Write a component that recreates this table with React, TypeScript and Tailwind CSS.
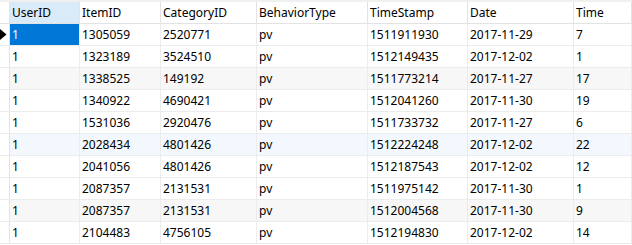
import React from 'react';

const columns = ["UserID", "ItemID", "CategoryID", "BehaviorType", "TimeStamp", "Date", "Time"];

const rows = [
    ["1", "1305059", "2520771", "pv", "1511911930", "2017-11-29", "7"],
    ["1", "1323189", "3524510", "pv", "1512149435", "2017-12-02", "1"],
    ["1", "1338525", "149192", "pv", "1511773214", "2017-11-27", "17"],
    ["1", "1340922", "4690421", "pv", "1512041260", "2017-11-30", "19"],
    ["1", "1531036", "2920476", "pv", "1511733732", "2017-11-27", "6"],
    ["1", "2028434", "4801426", "pv", "1512224248", "2017-12-02", "22"],
    ["1", "2041056", "4801426", "pv", "1512187543", "2017-12-02", "12"],
    ["1", "2087357", "2131531", "pv", "1511975142", "2017-11-30", "1"],
    ["1", "2087357", "2131531", "pv", "1512004568", "2017-11-30", "9"],
    ["1", "2104483", "4756105", "pv", "1512194830", "2017-12-02", "14"],
];

// row backgrounds as seen in the grid (striped rows + hovered row)
const rowBg = (i: number) => {
    if (i === 5) return "bg-[#f2f8fd]";
    if (i === 2 || i === 8) return "bg-[#f7f7f7]";
    return "bg-white";
};

const gridCols = "grid grid-cols-[10px_70px_81px_96px_111px_100px_106px_1fr]";

const App = () => {
    return (
        <div className="w-[632px] h-[245px] overflow-hidden bg-white font-['Noto_Sans',sans-serif] text-[12px] text-black">
            {/* top strip */}
            <div className="h-[2px] bg-[#f0f0f0]" />

            {/* Header */}
            <div className={`${gridCols} h-[22px] border-b border-[#e3e3e3]`}>
                <div className="border-r border-[#e3e3e3]" />
                {columns.map((c, i) => (
                    <div
                        key={c}
                        className={`flex items-center pl-[2px] border-r border-[#e3e3e3] ${i === 0 ? "bg-[#d9eaf9]" : "bg-white"}`}
                    >
                        {c}
                    </div>
                ))}
            </div>

            {/* Rows */}
            {rows.map((r, ri) => (
                <div key={ri} className={`${gridCols} h-[22px] border-b border-[#ececec] ${rowBg(ri)}`}>
                    <div className="relative border-r border-[#e3e3e3] bg-white">
                        {ri === 0 && (
                            <svg className="absolute left-0 top-[5px]" width="7" height="11" viewBox="0 0 7 11">
                                <path d="M0 0 L6.5 5.5 L0 11 Z" fill="#000" />
                            </svg>
                        )}
                    </div>
                    {r.map((v, ci) => (
                        <div
                            key={ci}
                            className={`flex items-center pl-[2px] border-r border-[#ececec] ${ri === 0 && ci === 0 ? "bg-[#0078d7] text-white" : ""}`}
                        >
                            {v}
                        </div>
                    ))}
                </div>
            ))}
        </div>
    );
};

export default App;
